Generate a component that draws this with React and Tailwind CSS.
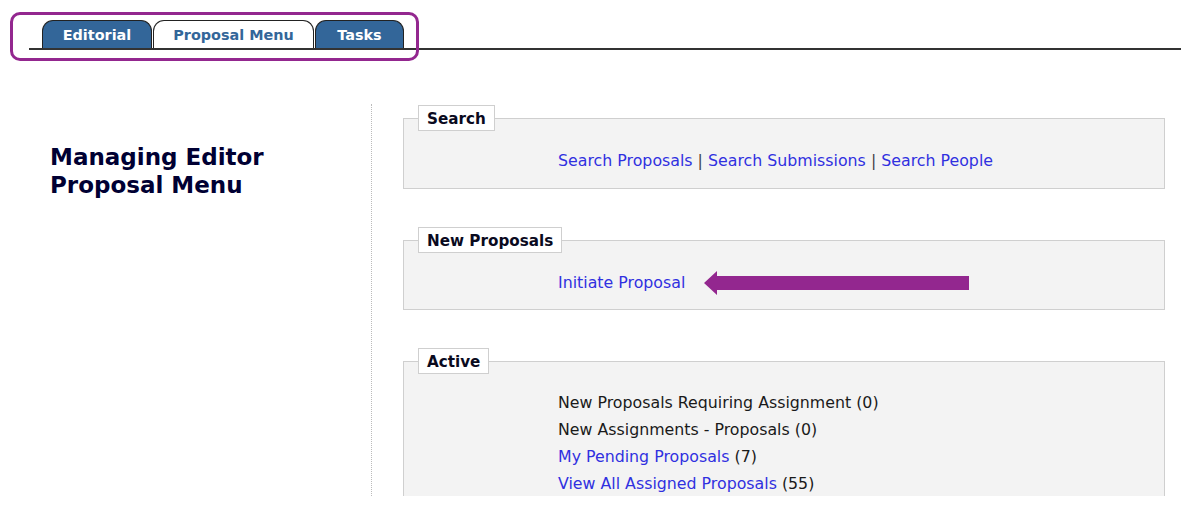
import React from "react";

const font = "font-['DejaVu_Sans','Verdana','Liberation_Sans',sans-serif]";

function Tab({ label, active, w }) {
  return (
    <div
      className={
        "h-[28px] pt-[2px] rounded-t-[11px] border border-b-0 border-[#222] flex items-center justify-center text-[14.4px] font-bold " +
        w +
        (active ? " bg-white text-[#336699]" : " bg-[#336699] text-white")
      }
    >
      {label}
    </div>
  );
}

function Panel({ title, children, className = "" }) {
  return (
    <fieldset className={"border border-[#cfcfcf] bg-[#f3f3f3] " + className}>
      <legend className="ml-[14px] border border-[#cfcfcf] bg-white px-[8px] pt-[2px] text-[15.2px] leading-[22px] font-bold text-[#0a0a1e]">
        {title}
      </legend>
      {children}
    </fieldset>
  );
}

const link = "text-[#3030e0]";

export default function App() {
  return (
    <div className={"relative w-[1193px] h-[519px] bg-white overflow-hidden " + font}>
      {/* Tabs */}
      <div className="pt-[20px] pl-[29px]">
        <div className="w-[1152px] border-b-2 border-[#333] flex items-end pl-[13px] gap-[1px]">
          <Tab label="Editorial" w="w-[110px]" />
          <Tab label="Proposal Menu" w="w-[161px]" active />
          <Tab label="Tasks" w="w-[89px]" />
        </div>
      </div>
      {/* annotation box */}
      <div className="absolute left-[10px] top-[12px] w-[409px] h-[49px] border-[3px] border-[#93278f] rounded-[10px]" />

      {/* Body */}
      <div className="mt-[54px] h-[392px] flex overflow-hidden">
        <div className="w-[372px] shrink-0 border-r border-dotted border-[#bbbbbb] pl-[50px] pt-[39px]">
          <h1 className="text-[23px] leading-[28px] font-bold text-[#000033]">
            Managing Editor
            <br />
            Proposal Menu
          </h1>
        </div>
        <div className="pl-[31px] w-[793px] pt-[1px] flex flex-col">
          <Panel title="Search">
            <div className="pl-[154px] pt-[20px] pb-[17px] text-[15.8px] leading-[20px] text-[#444]">
              <span className={link}>Search Proposals</span> |{" "}
              <span className={link}>Search Submissions</span> |{" "}
              <span className={link}>Search People</span>
            </div>
          </Panel>
          <Panel title="New Proposals" className="mt-[38px]">
            <div className="pl-[154px] pt-[20px] h-[56px] text-[15.8px] leading-[20px] flex items-start">
              <span className={link}>Initiate Proposal</span>
              <svg width="265" height="26" viewBox="0 0 265 26" className="ml-[19px] -mt-[3px] shrink-0">
                <polygon
                  points="0,13 13,1 13,6 265,6 265,20 13,20 13,25"
                  fill="#93278f"
                />
              </svg>
            </div>
          </Panel>
          <Panel title="Active" className="mt-[38px]">
            <div className="pl-[154px] pt-[15px] pb-[10px] text-[15.8px] leading-[27px] text-[#1a1a1a]">
              <div>New Proposals Requiring Assignment (0)</div>
              <div>New Assignments - Proposals (0)</div>
              <div>
                <span className={link}>My Pending Proposals</span> (7)
              </div>
              <div>
                <span className={link}>View All Assigned Proposals</span> (55)
              </div>
            </div>
          </Panel>
        </div>
      </div>
    </div>
  );
}
